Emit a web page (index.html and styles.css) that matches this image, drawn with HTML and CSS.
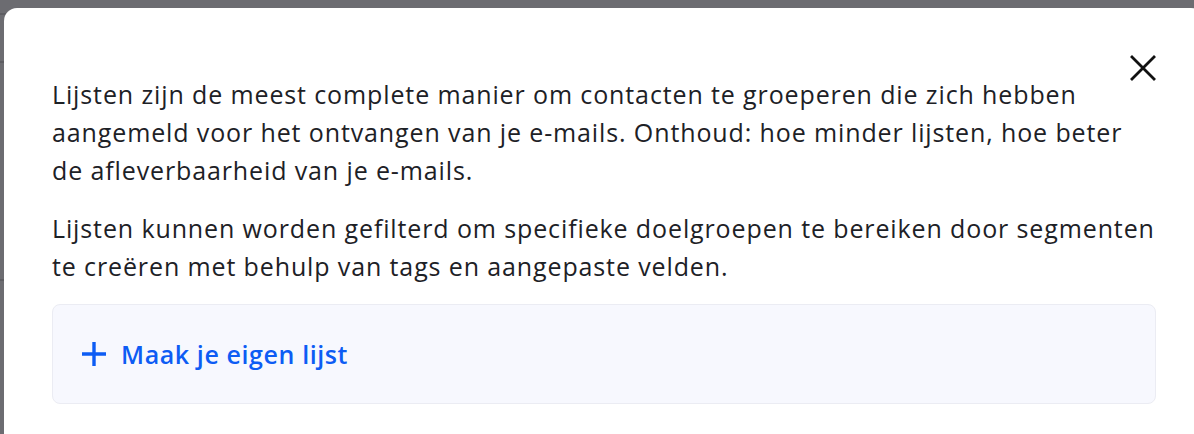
FILE: index.html
```html
<!DOCTYPE html>
<html lang="nl">
<head>
<meta charset="utf-8">
<title>Lijsten</title>
<link rel="stylesheet" href="styles.css">
</head>
<body>
<div class="backdrop">
  <div class="backdrop-line line-a"></div>
  <div class="backdrop-line line-b"></div>
  <div class="backdrop-line line-c"></div>
  <div class="modal">
    <div class="modal-header">
      <button class="close" aria-label="Sluiten">
        <svg width="26" height="26" viewBox="0 0 26 26" fill="none" stroke="#111" stroke-width="2.8" stroke-linecap="square">
          <path d="M2 2 L24 24 M24 2 L2 24"/>
        </svg>
      </button>
    </div>
    <p class="text">
      <span class="line">Lijsten zijn de meest complete manier om contacten te groeperen die zich hebben</span>
      <span class="line">aangemeld voor het ontvangen van je e-mails. Onthoud: hoe minder lijsten, hoe beter</span>
      <span class="line">de afleverbaarheid van je e-mails.</span>
    </p>
    <p class="text second">
      <span class="line">Lijsten kunnen worden gefilterd om specifieke doelgroepen te bereiken door segmenten</span>
      <span class="line">te creëren met behulp van tags en aangepaste velden.</span>
    </p>
    <div class="card">
      <svg class="plus" width="24" height="24" viewBox="0 0 24 24" fill="none" stroke="#0d5cf4" stroke-width="3.4">
        <path d="M12 0 V24 M0 12 H24"/>
      </svg>
      <span class="card-label">Maak je eigen lijst</span>
    </div>
  </div>
</div>
</body>
</html>
```
FILE: styles.css
```css
html, body {
  margin: 0;
  padding: 0;
  height: 100%;
  overflow: hidden;
}
body {
  background: #6c6c71;
  font-family: "Open Sans", "Noto Sans", sans-serif;
}
.backdrop {
  position: relative;
  height: 100%;
  padding: 8px 0 0 4px;
  box-sizing: border-box;
  overflow: hidden;
}
.backdrop-line {
  position: absolute;
  left: 0;
  width: 4px;
  height: 2px;
  background: #5d5d62;
}
.line-a { top: 13px; width: 12px; }
.line-b { top: 61px; }
.line-c { top: 279px; }
.modal {
  position: relative;
  width: 1200px;
  height: 426px;
  background: #ffffff;
  border-radius: 13px 13px 0 0;
  padding: 47px 48px 0 48px;
  box-sizing: border-box;
}
.modal-header {
  display: flex;
  justify-content: flex-end;
  height: 20px;
}
.close {
  background: none;
  border: 0;
  padding: 0;
  margin: 0;
  width: 26px;
  height: 26px;
  cursor: pointer;
  line-height: 0;
}
.text {
  margin: 0;
  font-size: 25px;
  line-height: 38px;
  color: #1d2126;
  letter-spacing: 0.88px;
}
.line {
  display: block;
  white-space: nowrap;
}
.second {
  margin-top: 20px;
}
.card {
  margin-top: 19px;
  height: 100px;
  box-sizing: border-box;
  border: 1px solid #ebecf3;
  border-radius: 8px;
  background: #f7f8fe;
  display: flex;
  align-items: center;
  padding-left: 29px;
  gap: 15px;
}
.plus {
  flex: none;
}
.card-label {
  font-size: 25px;
  font-weight: 600;
  color: #0d5cf4;
  line-height: 38px;
  letter-spacing: 0.6px;
}
```
